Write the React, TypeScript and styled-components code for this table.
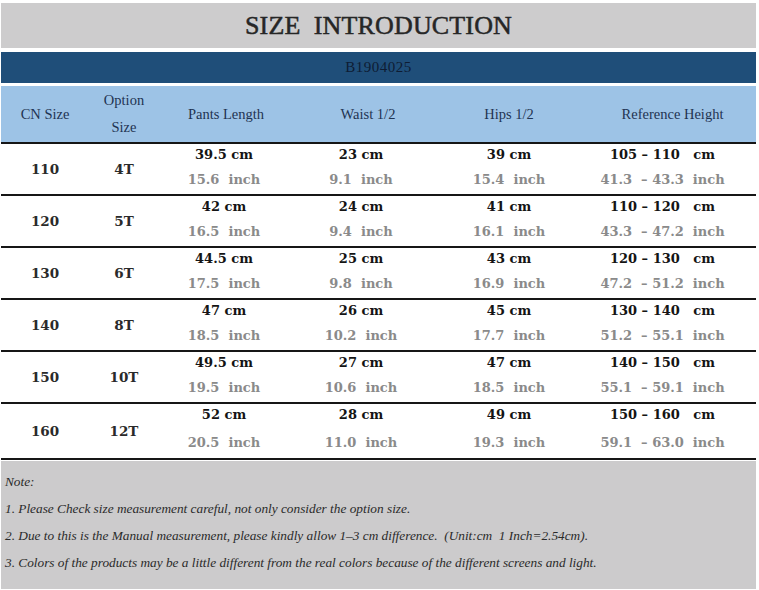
import React from "react";
import styled, { createGlobalStyle } from "styled-components";

const Global = createGlobalStyle`
  html, body { margin: 0; padding: 0; background: #ffffff; }
  body { width: 759px; height: 590px; overflow: hidden; }
`;

const Page = styled.div`
  display: flex;
  flex-direction: column;
  padding: 3px 3px 0 1px;
  width: 755px;
`;

const TitleBand = styled.div`
  height: 45px;
  background: #cdcccd;
  display: flex;
  align-items: center;
  justify-content: center;
  font-family: "Liberation Serif", serif;
  font-size: 26px;
  color: #262626;
  -webkit-text-stroke: 0.5px #262626;
  white-space: pre;
  letter-spacing: 0.15px;
`;

const CodeBand = styled.div`
  margin-top: 4px;
  height: 31px;
  background: #1f4e79;
  display: flex;
  align-items: center;
  justify-content: center;
  font-family: "Liberation Serif", serif;
  font-size: 15px;
  color: #0e1c33;
  letter-spacing: 0.5px;
`;

const cols = "88px 70px 134px 136px 160px 167px";

const HeaderRow = styled.div`
  margin-top: 3px;
  height: 56px;
  background: #9dc3e6;
  display: grid;
  grid-template-columns: ${cols};
  border-bottom: 2px solid #161616;
  font-family: "Liberation Serif", serif;
  font-size: 14.5px;
  color: #1f3352;
`;

const HeadCell = styled.div<{ $shift?: number }>`
  display: flex;
  flex-direction: column;
  align-items: center;
  justify-content: center;
  gap: 8px;
  padding-left: ${(p) => p.$shift ?? 0}px;
  line-height: 19px;
`;

const Row = styled.div<{ $tall?: boolean }>`
  height: ${(p) => (p.$tall ? 54 : 50)}px;
  display: grid;
  grid-template-columns: ${cols};
  border-bottom: 2px solid #161616;
  font-family: "DejaVu Serif", serif;
  font-weight: bold;
  font-size: 13px;
`;

const KeyCell = styled.div`
  display: flex;
  align-items: center;
  justify-content: center;
  color: #2a2a2a;
  font-size: 13.5px;
`;

const ValueCell = styled.div<{ $tall?: boolean; $right?: number }>`
  display: flex;
  flex-direction: column;
  align-items: center;
  padding-top: 2px;
  padding-right: ${(p) => p.$right ?? 0}px;
  gap: ${(p) => (p.$tall ? 10 : 7)}px;
  line-height: 18px;
  white-space: pre;
`;

const Cm = styled.span`
  color: #141414;
`;

const Inch = styled.span`
  color: #8a8a8a;
`;

const NoteBox = styled.div`
  margin-top: 1px;
  height: 128px;
  background: #cccbcc;
  padding: 11px 0 0 4px;
  box-sizing: border-box;
  font-family: "Liberation Serif", serif;
  font-style: italic;
  font-size: 13.3px;
  color: #2a2a2a;
  display: flex;
  flex-direction: column;
  gap: 8px;
  line-height: 19px;
  white-space: pre;
`;

type R = {
  cn: string;
  opt: string;
  vals: [string, string][];
};

const rows: R[] = [
  { cn: "110", opt: "4T", vals: [["39.5 cm", "15.6  inch"], ["23 cm", "9.1  inch"], ["39 cm", "15.4  inch"], ["105 – 110   cm", "41.3  – 43.3  inch"]] },
  { cn: "120", opt: "5T", vals: [["42 cm", "16.5  inch"], ["24 cm", "9.4  inch"], ["41 cm", "16.1  inch"], ["110 – 120   cm", "43.3  – 47.2  inch"]] },
  { cn: "130", opt: "6T", vals: [["44.5 cm", "17.5  inch"], ["25 cm", "9.8  inch"], ["43 cm", "16.9  inch"], ["120 – 130   cm", "47.2  – 51.2  inch"]] },
  { cn: "140", opt: "8T", vals: [["47 cm", "18.5  inch"], ["26 cm", "10.2  inch"], ["45 cm", "17.7  inch"], ["130 – 140   cm", "51.2  – 55.1  inch"]] },
  { cn: "150", opt: "10T", vals: [["49.5 cm", "19.5  inch"], ["27 cm", "10.6  inch"], ["47 cm", "18.5  inch"], ["140 – 150   cm", "55.1  – 59.1  inch"]] },
  { cn: "160", opt: "12T", vals: [["52 cm", "20.5  inch"], ["28 cm", "11.0  inch"], ["49 cm", "19.3  inch"], ["150 – 160   cm", "59.1  – 63.0  inch"]] },
];

const rightPad = [4, 0, 0, 20];

export default function App() {
  return (
    <>
      <Global />
      <Page>
        <TitleBand>{"SIZE  INTRODUCTION"}</TitleBand>
        <CodeBand>B1904025</CodeBand>
        <HeaderRow>
          <HeadCell>CN Size</HeadCell>
          <HeadCell>
            <span>Option</span>
            <span>Size</span>
          </HeadCell>
          <HeadCell>Pants Length</HeadCell>
          <HeadCell $shift={14}>Waist 1/2</HeadCell>
          <HeadCell>Hips 1/2</HeadCell>
          <HeadCell>Reference Height</HeadCell>
        </HeaderRow>
        {rows.map((r, i) => {
          const tall = i === rows.length - 1;
          return (
            <Row key={r.cn} $tall={tall}>
              <KeyCell>{r.cn}</KeyCell>
              <KeyCell>{r.opt}</KeyCell>
              {r.vals.map(([cm, inch], j) => (
                <ValueCell key={j} $tall={tall} $right={rightPad[j]}>
                  <Cm>{cm}</Cm>
                  <Inch>{inch}</Inch>
                </ValueCell>
              ))}
            </Row>
          );
        })}
        <NoteBox>
          <span>Note:</span>
          <span>1. Please Check size measurement careful, not only consider the option size.</span>
          <span>{"2. Due to this is the Manual measurement, please kindly allow 1–3 cm difference.  (Unit:cm  1 Inch=2.54cm)."}</span>
          <span>3. Colors of the products may be a little different from the real colors because of the different screens and light.</span>
        </NoteBox>
      </Page>
    </>
  );
}
